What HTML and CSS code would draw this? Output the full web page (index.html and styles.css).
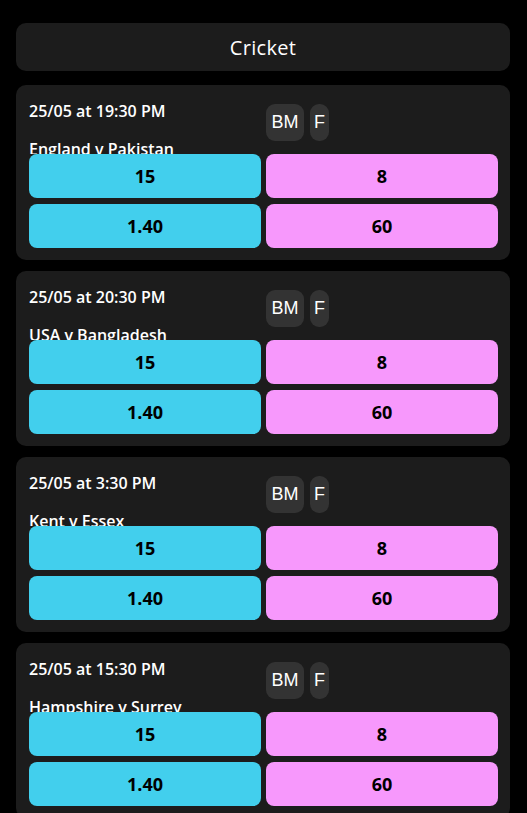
FILE: index.html
```html
<!DOCTYPE html>
<html lang="en">
<head>
<meta charset="utf-8">
<title>Cricket</title>
<link rel="stylesheet" href="styles.css">
</head>
<body>
<div class="page">
  <div class="header">Cricket</div>

  <div class="card">
    <div class="top">
      <div class="info">
        <div class="date">25/05 at 19:30 PM</div>
        <div class="teams">England v Pakistan</div>
      </div>
      <div class="badges">
        <button class="badge bm">BM</button>
        <button class="badge f">F</button>
      </div>
    </div>
    <div class="odds">
      <div class="odd back">15</div>
      <div class="odd lay">8</div>
      <div class="odd back">1.40</div>
      <div class="odd lay">60</div>
    </div>
  </div>

  <div class="card">
    <div class="top">
      <div class="info">
        <div class="date">25/05 at 20:30 PM</div>
        <div class="teams">USA v Bangladesh</div>
      </div>
      <div class="badges">
        <button class="badge bm">BM</button>
        <button class="badge f">F</button>
      </div>
    </div>
    <div class="odds">
      <div class="odd back">15</div>
      <div class="odd lay">8</div>
      <div class="odd back">1.40</div>
      <div class="odd lay">60</div>
    </div>
  </div>

  <div class="card">
    <div class="top">
      <div class="info">
        <div class="date">25/05 at 3:30 PM</div>
        <div class="teams">Kent v Essex</div>
      </div>
      <div class="badges">
        <button class="badge bm">BM</button>
        <button class="badge f">F</button>
      </div>
    </div>
    <div class="odds">
      <div class="odd back">15</div>
      <div class="odd lay">8</div>
      <div class="odd back">1.40</div>
      <div class="odd lay">60</div>
    </div>
  </div>

  <div class="card">
    <div class="top">
      <div class="info">
        <div class="date">25/05 at 15:30 PM</div>
        <div class="teams">Hampshire v Surrey</div>
      </div>
      <div class="badges">
        <button class="badge bm">BM</button>
        <button class="badge f">F</button>
      </div>
    </div>
    <div class="odds">
      <div class="odd back">15</div>
      <div class="odd lay">8</div>
      <div class="odd back">1.40</div>
      <div class="odd lay">60</div>
    </div>
  </div>
</div>
</body>
</html>
```

FILE: styles.css
```css
* { box-sizing: border-box; }

html, body {
  margin: 0;
  padding: 0;
  background: #000;
}

body {
  font-family: "Open Sans", "Noto Sans", sans-serif;
  color: #fff;
}

.page {
  padding: 23px 17px 0 16px;
  display: flex;
  flex-direction: column;
}

.header {
  height: 48px;
  background: #1c1c1c;
  border-radius: 10px;
  display: flex;
  align-items: center;
  justify-content: center;
  font-size: 20px;
  font-weight: 500;
  letter-spacing: 0.3px;
  margin-bottom: 14px;
}

.card {
  background: #1c1c1c;
  border-radius: 10px;
  padding: 12px 12px 12px 13px;
  display: flex;
  flex-direction: column;
  margin-bottom: 11px;
}

.top {
  height: 57px;
  display: grid;
  grid-template-columns: 1fr 1fr;
  column-gap: 5px;
  overflow: hidden;
}

.info {
  display: flex;
  flex-direction: column;
}

.date {
  margin-top: 3px;
  font-size: 16px;
  line-height: 22px;
  font-weight: 600;
}

.teams {
  margin-top: 16px;
  font-size: 16px;
  line-height: 22px;
  font-weight: 600;
  white-space: nowrap;
}

.badges {
  display: flex;
  gap: 6px;
  margin-top: 7px;
  align-items: flex-start;
}

.badge {
  height: 37px;
  border: none;
  border-radius: 9px;
  background: #333333;
  color: #fff;
  font-family: "Liberation Sans", Arial, sans-serif;
  font-size: 18px;
  padding: 0;
  display: flex;
  align-items: center;
  justify-content: center;
}

.badge.bm { width: 38px; }
.badge.f { width: 19px; }

.odds {
  display: grid;
  grid-template-columns: 1fr 1fr;
  column-gap: 5px;
  row-gap: 6px;
}

.odd {
  height: 44px;
  border-radius: 8px;
  display: flex;
  align-items: center;
  justify-content: center;
  color: #000;
  font-size: 18px;
  font-weight: 700;
}

.odd.back { background: #42cfed; }
.odd.lay { background: #f798fc; }
```
